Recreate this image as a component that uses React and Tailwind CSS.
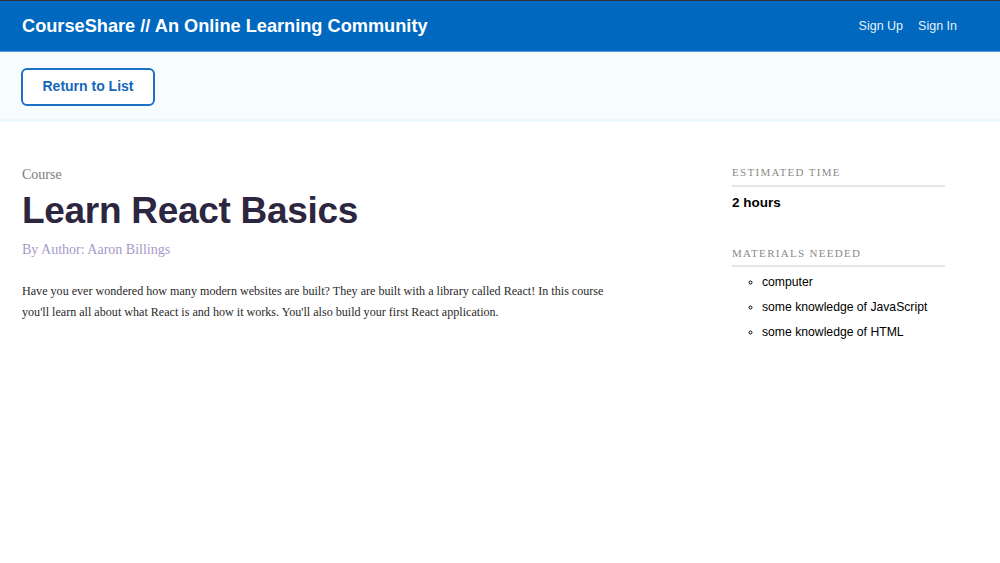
import React from "react";

const materials = ["computer", "some knowledge of JavaScript", "some knowledge of HTML"];

function Header() {
  return (
    <header className="border-t border-[#2b2f36] bg-[#0068bf] border-b border-b-[#5a9ad6]">
      <div className="flex items-center justify-between h-[50px] pl-[22px] pr-[43px]">
        <h1 className="text-[18.2px] font-bold text-white pt-[2px]">
          CourseShare // An Online Learning Community
        </h1>
        <nav className="flex gap-[15px] text-[12.5px] text-[#e6f0fa]">
          <a href="#">Sign Up</a>
          <a href="#">Sign In</a>
        </nav>
      </div>
    </header>
  );
}

function ActionBar() {
  return (
    <div className="bg-[#f7fdff] border-b-[3px] border-[#ebfaff] h-[70px] flex items-center pl-[21px] pt-[2px]">
      <button className="w-[134px] h-[38px] border-2 border-[#1a72c6] rounded-[6px] text-[#1467bb] text-[14px] font-bold bg-white">
        Return to List
      </button>
    </div>
  );
}

function Sidebar() {
  return (
    <aside className="w-[213px] pt-[42px] mr-[55px]">
      <h3 className="font-['Liberation_Serif',serif] text-[11px] uppercase tracking-[1.3px] text-[#8a8a8a] pb-[4px] border-b-2 border-[#e5e5e5]">
        Estimated Time
      </h3>
      <p className="text-[13.5px] font-bold text-black mt-[6px]">2 hours</p>

      <h3 className="font-['Liberation_Serif',serif] text-[11px] uppercase tracking-[1.3px] text-[#8a8a8a] pb-[4px] border-b-2 border-[#e5e5e5] mt-[32px]">
        Materials Needed
      </h3>
      <ul className="list-[circle] pl-[30px] mt-[3px] text-[12.2px] text-black">
        {materials.map((m) => (
          <li key={m} className="h-[25px] leading-[25px] marker:text-[10px]">
            {m}
          </li>
        ))}
      </ul>
    </aside>
  );
}

export default function App() {
  return (
    <div className="min-h-[563px] bg-white font-['Liberation_Sans',Arial,sans-serif]">
      <Header />
      <ActionBar />
      <div className="flex justify-between">
        <main className="pl-[22px] pt-[45px] w-[650px]">
          <p className="font-['Liberation_Serif',serif] text-[14px] text-[#7d7d7d] leading-[16px]">Course</p>
          <h2 className="text-[37px] font-bold text-[#2d2640] leading-[44px] mt-[6px] tracking-[-0.3px]">
            Learn React Basics
          </h2>
          <p className="font-['Liberation_Serif',serif] text-[14px] text-[#a69ac9] mt-[6px]">
            By Author: Aaron Billings
          </p>
          <p className="font-['Liberation_Serif',serif] text-[12.1px] text-[#2a2a2a] leading-[21px] mt-[21px] w-[596px]">
            Have you ever wondered how many modern websites are built? They are built with a library called React! In this course you'll learn all about what React is and how it works. You'll also build your first React application.
          </p>
        </main>
        <Sidebar />
      </div>
    </div>
  );
}
